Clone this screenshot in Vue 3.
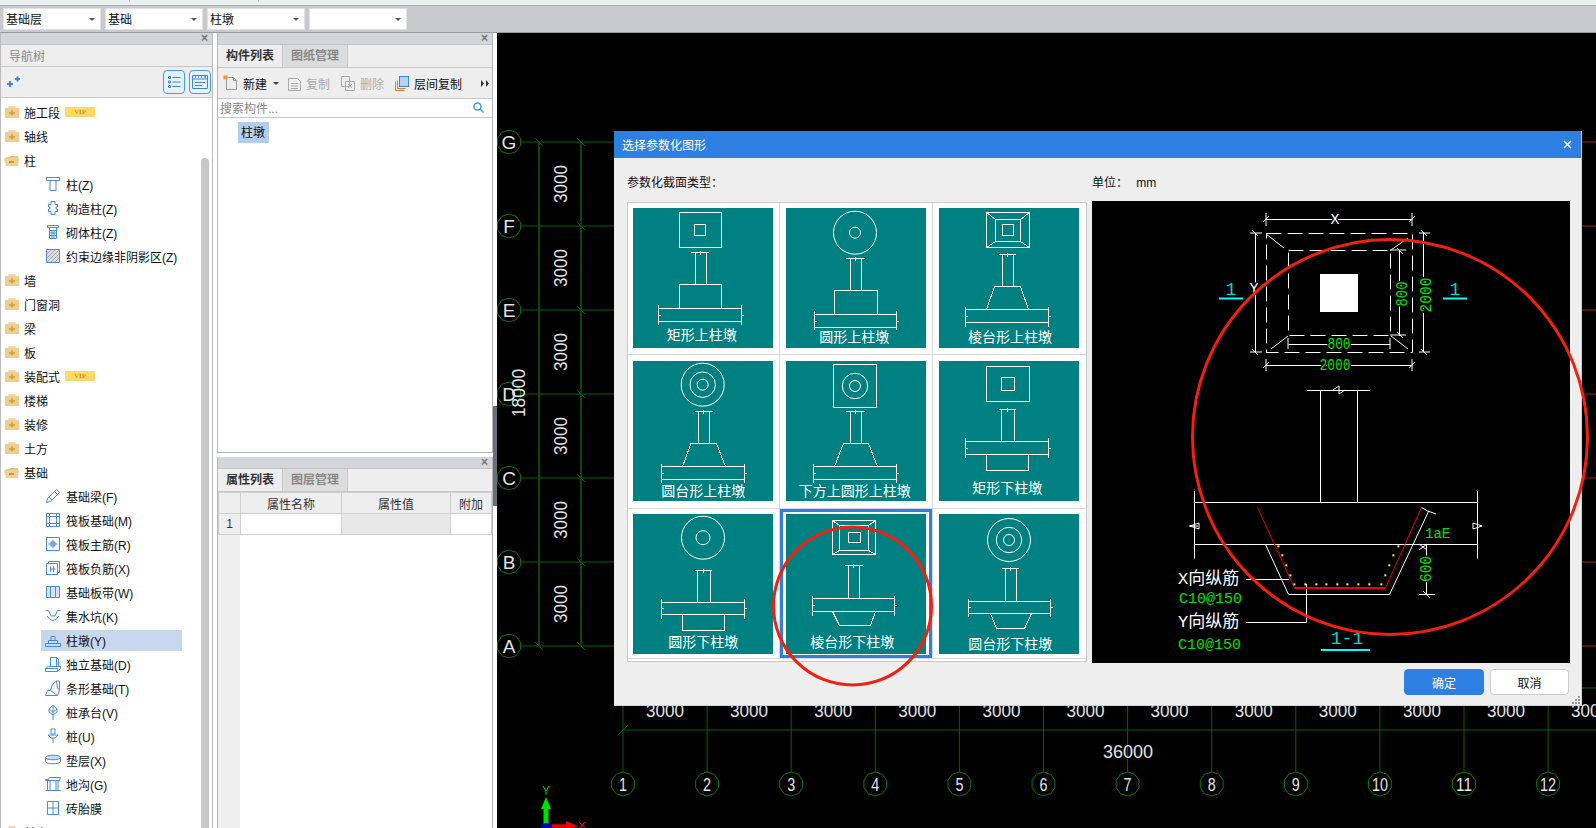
<script setup>
// helpers for the teal section thumbnails, coordinates are inside a 140x140 tile
const box = (x1, y1, x2, y2) => `M${x1} ${y1}H${x2}V${y2}H${x1}Z`;
const col = (capY, capL, capR, l, r, bottom) => {
  const mid = (capL + capR) / 2;
  return `M${capL} ${capY}H${capR}M${l} ${capY}V${bottom}M${r} ${capY}V${bottom}M${mid} ${capY - 2}v4`;
};
const base = (x1, x2, y1, y2, top, bot) => {
  const m = (y1 + y2) / 2;
  return box(x1, y1, x2, y2) + `M${x1} ${top}V${bot}M${x2} ${top}V${bot}M${x1 - 1} ${m}h3M${x2 - 1} ${m}h3`;
};
const trap = (t1, t2, y1, b1, b2, y2) => `M${b1} ${y2}L${t1} ${y1}H${t2}L${b2} ${y2}`;
const squares = (o, m, i) =>
  box(...o) + box(...m) + box(...i) +
  `M${o[0]} ${o[1]}L${m[0]} ${m[1]}M${o[2]} ${o[1]}L${m[2]} ${m[1]}M${o[0]} ${o[3]}L${m[0]} ${m[3]}M${o[2]} ${o[3]}L${m[2]} ${m[3]}`;

const tiles = [
  {
    label: "矩形上柱墩", lx: 68.7, ly: 132,
    d: box(46.5, 4.5, 88.5, 39.5) + box(61.5, 16.5, 72.5, 27.5) + col(44.5, 58, 76, 62.5, 73.5, 76.5) +
      box(46.5, 76.5, 88.5, 100.5) + base(25.5, 108.5, 100.5, 113.5, 97, 116.5),
    circles: [],
  },
  {
    label: "圆形上柱墩", lx: 68.3, ly: 134,
    d: col(50.5, 60, 79, 64.5, 75.5, 82.5) + box(48.5, 82.5, 91.5, 106.5) + base(28.5, 110.5, 106.5, 119.5, 103, 122),
    circles: [[69, 24.7, 21.5], [69, 24.7, 5.5]],
  },
  {
    label: "棱台形上柱墩", lx: 71, ly: 134,
    d: squares([47.5, 4.5, 90.5, 39.5], [56.5, 11.5, 81.5, 33.5], [63.5, 16.5, 74.5, 27.5]) +
      col(46.5, 59.5, 77, 63.5, 74.5, 78.5) + trap(55.5, 81.5, 78.5, 47.5, 89.5, 101.5) +
      base(26.5, 109.5, 101.5, 114.5, 99, 118.5),
    circles: [],
  },
  {
    label: "圆台形上柱墩", lx: 70.3, ly: 135,
    d: col(50.5, 61.5, 79.5, 65.5, 76.5, 82.5) + trap(58, 83.5, 82.5, 49.5, 92.5, 105.5) +
      base(28.5, 111.5, 105.5, 118.5, 103, 122),
    circles: [[69.7, 23.7, 21.5], [69.7, 23.7, 12.7], [69.7, 23.7, 5.5]],
  },
  {
    label: "下方上圆形上柱墩", lx: 68.7, ly: 135,
    d: box(47.5, 3.5, 90.5, 46.5) + col(50.5, 60, 78.5, 64.5, 75.5, 82.5) + trap(57.5, 82.5, 82.5, 48.5, 91.5, 105.5) +
      base(27.5, 110.5, 105.5, 118.5, 103, 122),
    circles: [[69, 25, 12.7], [69, 25, 5.5]],
  },
  {
    label: "矩形下柱墩", lx: 68.3, ly: 131.5,
    d: box(47.5, 5.5, 90.5, 40.5) + box(62.5, 16.5, 75.5, 29.5) + col(48.5, 59.5, 76.5, 62.5, 75.5, 80.5) +
      base(26.5, 109.5, 80.5, 93.5, 77, 97) + `M47.5 93.5V109.5H89.5V93.5`,
    circles: [],
  },
  {
    label: "圆形下柱墩", lx: 70.3, ly: 133,
    d: col(56.5, 61.5, 78.5, 64.5, 77.5, 88.5) + base(28.5, 111.5, 88.5, 100.5, 84.5, 104.5) + `M49.5 100.5V116.5H91.5V100.5`,
    circles: [[70, 23.7, 21.5], [70, 23.7, 7]],
  },
  {
    label: "棱台形下柱墩", lx: 66.3, ly: 133,
    d: squares([46.5, 6.5, 89.5, 40.5], [53.5, 11.5, 82.5, 36.5], [62.5, 18.5, 74.5, 28.5]) +
      col(51.5, 58.5, 76.5, 62.5, 73.5, 84.5) + base(26.5, 108.5, 84.5, 97.5, 81.5, 101.5) +
      `M46.5 97.5L53.5 111.5H84.5L89.5 97.5`,
    circles: [],
    selected: true,
  },
  {
    label: "圆台形下柱墩", lx: 71.3, ly: 134.5,
    d: col(54.5, 62.5, 79.5, 66.5, 77.5, 87.5) + base(29.5, 111.5, 87.5, 99.5, 84.5, 102.5) +
      `M51.5 99.5L57.5 114.5H85.5L92.5 99.5`,
    circles: [[70, 26, 21.5], [70, 26, 12.7], [70, 26, 5.5]],
  },
];

// 16x16 blue outline icons of the navigation tree
const icons = {
  zhu: "M1.5 1.5h13v3h-13zM4 4.5h8M5 4.5v10h6v-10",
  gouzao: "M6 1.5h4v3h2.5v2.5H11v2h1.5v2.5H10v3H6v-3H3.5V9H5V7H3.5V4.5H6z",
  qiti: "M2.5 1.5h11v2h-11zM4.5 3.5v11h7v-11M4.5 6.5h7M4.5 9h7M4.5 11.5h7M7 6.5v8M9 6.5v8",
  yueshu: "M1.5 1.5h13v13h-13z",
  liang: "M1.5 14.5l1-4L11.5 1.5l3 3-9 9zM9.5 3.5l3 3M4 9l3 3",
  fabanjc: "M1.5 1.5h13v13h-13zM1.5 4.5h13M1.5 11.5h13M4.5 1.5v13M11.5 1.5v13",
  fabanzj: "M1.5 1.5h13v13h-13zM8 3.5v9M3.5 8h9M6 6h4v4H6z",
  fabanfj: "M1.5 3.5h11v11h-11zM3.5 3.5v-2h11v11h-2M5.5 6.5v5M8.5 6v6M5.5 9h5",
  bandai: "M1.5 2.5h13v11h-13zM5.5 2.5v11M10.5 2.5v11",
  keng: "M.5 2.5h3l2.5 5.5h4l2.5-5.5h3M2 8q6 9 12 0",
  zhudun: "M.5 11.5h15v3H.5zM3.5 11.5v-3h9v3M6 8.5v-4h4v4",
  duli: "M5.5 1.5h6l2 2v7h-8zM11.5 1.5v9M.5 12.5l3-2h12v2l-3 3H.5z M.5 12.5h12v3",
  tiaoxing: "M.5 15.5l2-5h3l2-6 4-3.5h3v9l-2 5.5zM5.5 10.5l7 5M11.5 1l1 7 2 2",
  zct: "M8 1L12 5v3L8 11 4 8V5zM8 1v15M4 5l4 3 4-3",
  pile: "M6 1h4v5H6zM3 7h10l-3 3H6zM8 10v5",
  dian: "M.5 5.5c0-3 15-3 15 0v4c0 3-15 3-15 0zM.5 5.5c0 3 15 3 15 0",
  digou: "M.5 3.5h3l1-2h11l-1 3H.5zM2.5 4.5v10M13 4.5v10M.5 14.5h15M5 4.5v10M11 4.5v10",
  zhaitai: "M2.5 1.5h11v13h-11zM8 1.5v13M2.5 8h11",
};

const tree = [
  { label: "施工段", vip: true },
  { label: "轴线" },
  { label: "柱", open: true },
  { label: "柱(Z)", icon: "zhu" },
  { label: "构造柱(Z)", icon: "gouzao" },
  { label: "砌体柱(Z)", icon: "qiti" },
  { label: "约束边缘非阴影区(Z)", icon: "yueshu", hatch: true },
  { label: "墙" },
  { label: "门窗洞" },
  { label: "梁" },
  { label: "板" },
  { label: "装配式", vip: true },
  { label: "楼梯" },
  { label: "装修" },
  { label: "土方" },
  { label: "基础", open: true },
  { label: "基础梁(F)", icon: "liang" },
  { label: "筏板基础(M)", icon: "fabanjc" },
  { label: "筏板主筋(R)", icon: "fabanzj" },
  { label: "筏板负筋(X)", icon: "fabanfj" },
  { label: "基础板带(W)", icon: "bandai", tint: true },
  { label: "集水坑(K)", icon: "keng" },
  { label: "柱墩(Y)", icon: "zhudun", active: true },
  { label: "独立基础(D)", icon: "duli" },
  { label: "条形基础(T)", icon: "tiaoxing" },
  { label: "桩承台(V)", icon: "zct" },
  { label: "桩(U)", icon: "pile" },
  { label: "垫层(X)", icon: "dian", tint: true },
  { label: "地沟(G)", icon: "digou" },
  { label: "砖胎膜", icon: "zhaitai" },
  { label: "其它" },
];

// CAD grid, page coordinates
const rowAxes = ["G", "F", "E", "D", "C", "B", "A"].map((name, i) => ({ name, y: 142 + i * 84 }));
const colAxes = Array.from({ length: 12 }, (_, i) => ({ name: String(i + 1), x: 623 + i * 84.1 }));
const rowDims = [184, 268, 352, 436, 520, 604];
const colDims = colAxes.map((a) => a.x + 42);
const octagon = (cx, cy, r) => {
  let pts = [];
  for (let i = 0; i < 10; i++) {
    const a = (Math.PI * 2 * i) / 10 + Math.PI / 10;
    pts.push(`${(cx + r * Math.cos(a)).toFixed(1)},${(cy + r * Math.sin(a)).toFixed(1)}`);
  }
  return pts.join(" ");
};

const rebarDots = [
  [580, 319], [592, 346], [604, 376], [616, 406], [628, 433], [661, 433], [694, 433], [724, 433], [757, 433],
  [787, 433], [820, 433], [853, 433], [889, 433], [901, 406], [913, 376], [925, 346], [940, 319],
].map(([x, y]) => [1085 + x / 3, 440 + y / 3]);
</script>

<template>
  <div class="page">
    <div class="menu-strip">
      <span class="tick"></span>
      <span class="tick"></span>
    </div>
    <div class="combos">
      <div class="combo" v-for="c in ['基础层', '基础', '柱墩', '']" :key="c">
        <span>{{ c }}</span><i class="caret"></i>
      </div>
    </div>

    <div class="main">
      <!-- 导航树 -->
      <aside class="nav">
        <div class="dock-head"><span class="x">×</span></div>
        <div class="nav-title">导航树</div>
        <div class="nav-tools">
          <svg class="spark" width="14" height="12" viewBox="0 0 14 12">
            <path d="M0 8h6M3 5v6" stroke="#3f86d8" stroke-width="2" fill="none" />
            <path d="M8 3h5M10.5 .5v5" stroke="#3f86d8" stroke-width="2" fill="none" />
          </svg>
          <div class="toggle">
            <svg width="14" height="14" viewBox="0 0 14 14" fill="none" stroke="#3f86d8">
              <path d="M1.5 1.5h2v2h-2zM1.5 6h2v2h-2zM1.5 10.500h2v2h-2zM5.500 2.500h8M5.500 7h8M5.500 11.500h8" />
            </svg>
          </div>
          <div class="toggle">
            <svg width="16" height="14" viewBox="0 0 16 14" fill="none" stroke="#3f86d8">
              <path d="M.5 .5h15v13H.5zM.5 4h15M3 7.500h10M3 10.500h7" />
              <path d="M3 2h1M6 2h1M9 2h1M12 2h2" stroke-width="1.500" />
            </svg>
          </div>
        </div>
        <div class="tree">
          <ul class="tree-list">
            <li v-for="row in tree" :key="row.label" :class="['row', { child: row.icon, active: row.active }]">
              <svg v-if="row.icon" class="ico" width="16" height="16" viewBox="0 0 16 16">
                <template v-if="row.hatch">
                  <rect x="2" y="2" width="12" height="12" fill="#dcdcdc" />
                  <path d="M2 6l4-4M2 10l8-8M2 14L14 2M6 14l8-8M10 14l4-4" stroke="#a8a8a8" fill="none" />
                </template>
                <rect v-if="row.icon === 'bandai'" x="2" y="3" width="12" height="10" fill="#d5e5f7" />
                <ellipse v-if="row.icon === 'dian'" cx="8" cy="5.500" rx="7.500" ry="2.500" fill="#c9ddf4" />
                <path :d="icons[row.icon]" fill="none" stroke="#4a8ad8" />
              </svg>
              <svg v-else class="folder" width="16" height="12" viewBox="0 0 16 12">
                <template v-if="row.open">
                  <path d="M0 3h5l1-1h8v2H4z" fill="#e3c486" />
                  <path d="M0 4h15l-1 8H2z" fill="#f2cf8c" />
                  <path d="M5 8h5" stroke="#b58a3e" stroke-width="1.500" />
                </template>
                <template v-else>
                  <path d="M5 0h6l1 2H4z" fill="#efd9ab" />
                  <rect x="1" y="2" width="14" height="10" fill="#f0cd8d" />
                  <path d="M5 7h6M8 4.500v5" stroke="#c69a4c" stroke-width="1.500" />
                </template>
              </svg>
              <span>{{ row.label }}</span>
              <em v-if="row.vip" class="vip">VIP</em>
            </li>
          </ul>
          <div class="scroll"><div class="thumb"></div></div>
        </div>
      </aside>

      <!-- 构件列表 / 属性列表 -->
      <section class="mid">
        <div class="upper">
          <div class="dock-head"><span class="x">×</span></div>
          <div class="tabs">
            <span class="tab on">构件列表</span>
            <span class="tab">图纸管理</span>
          </div>
          <div class="tools">
            <span class="tool new">
              <svg width="15" height="16" viewBox="0 0 15 16" fill="none" stroke="#9a9a9a">
                <path d="M3.500 2.500h7l3 3v9h-10zM10.500 2.500v3h3" />
                <path d="M.5 .5h4v4h-4z" fill="#f39a2d" stroke="#f7c27f" stroke-dasharray="1 1" />
              </svg>
              新建<i class="caret dark"></i>
            </span>
            <span class="tool off">
              <svg width="13" height="15" viewBox="0 0 13 15" fill="none" stroke="#aaa">
                <path d="M.5 2.500h9l3 3v9H.5zM3 7.500h7M3 10h7M3 12.500h7" />
              </svg>
              复制
            </span>
            <span class="tool off">
              <svg width="14" height="15" viewBox="0 0 14 15" fill="none" stroke="#aaa">
                <path d="M.5 .5h8v10h-8zM4.500 5.500h9v9h-9zM7 8l4 4M11 8l-4 4" />
              </svg>
              删除
            </span>
            <span class="tool">
              <svg width="14" height="15" viewBox="0 0 14 15" fill="none">
                <path d="M.5 5.500v9h9" stroke="#e07b39" />
                <path d="M2.500 4.500v8h8" stroke="#e07b39" />
                <rect x="4.500" y=".5" width="9" height="10" fill="#b3d3f5" stroke="#3f86d8" />
              </svg>
              层间复制
            </span>
            <span class="more">
              <svg width="8" height="7" viewBox="0 0 8 7"><path d="M0 0l3 3.500L0 7zM5 0l3 3.500L5 7z" fill="#333" /></svg>
            </span>
          </div>
          <div class="search">
            <span>搜索构件...</span>
            <svg width="11" height="11" viewBox="0 0 11 11" fill="none" stroke="#3f9fe0" stroke-width="1.500">
              <circle cx="4.500" cy="4.500" r="3.500" /><path d="M7 7l3.500 3.500" />
            </svg>
          </div>
          <div class="list"><span class="item">柱墩</span></div>
        </div>

        <div class="lower">
          <div class="dock-head"><span class="x">×</span></div>
          <div class="tabs">
            <span class="tab on">属性列表</span>
            <span class="tab">图层管理</span>
          </div>
          <table class="props">
            <colgroup>
              <col style="width: 22px" /><col style="width: 101px" /><col style="width: 109px" /><col style="width: 41px" />
            </colgroup>
            <thead>
              <tr><th></th><th>属性名称</th><th>属性值</th><th>附加</th></tr>
            </thead>
            <tbody>
              <tr><th>1</th><td></td><td class="ro"></td><td></td></tr>
            </tbody>
          </table>
          <div class="rail"></div>
        </div>
      </section>

      <div class="split"><div class="grip"></div></div>

      <!-- 绘图区 -->
      <div class="canvas">
        <svg class="cad" width="1099" height="795" viewBox="497 33 1099 795">
          <g stroke="#0d5f0d" fill="none">
            <path v-for="a in rowAxes" :key="a.name" :d="`M521 ${a.y}H1596`" />
            <path d="M539 142V646M581 142V646" stroke-width="1.500" />
            <path v-for="a in colAxes" :key="a.name" :d="`M${a.x} 700V772`" />
            <path d="M623 730H1596" />
            <path d="M618 735l10-10" />
            <path v-for="a in rowAxes" :key="a.name + 't'" :d="`M577 ${a.y - 4}l8 8`" />
            <path d="M535 138l8 8M535 642l8 8" />
            <polygon v-for="a in rowAxes" :key="a.name + 'b'" :points="octagon(509, a.y, 12)" stroke="#0a7a0a" />
            <polygon v-for="a in colAxes" :key="a.name + 'c'" :points="octagon(a.x, 784, 12)" stroke="#0a7a0a" />
          </g>
          <path d="M1582 142H1596M1582 226H1596M1582 310H1596M1582 394H1596M1582 478H1596M1582 562H1596M1582 646H1596" stroke="#8a0000" />
          <path d="M1582 688H1596" stroke="#0d5f0d" />
          <g class="cad-text">
            <text v-for="a in rowAxes" :key="a.name" x="509" :y="a.y + 7" text-anchor="middle" font-size="19">{{ a.name }}</text>
            <text
              v-for="a in colAxes"
              :key="a.name"
              :x="a.x"
              y="791"
              text-anchor="middle"
              font-size="19"
              :textLength="a.name.length * 8"
              lengthAdjust="spacingAndGlyphs"
            >{{ a.name }}</text>
            <text
              v-for="y in rowDims"
              :key="y"
              x="567"
              :y="y"
              :transform="`rotate(-90 567 ${y})`"
              text-anchor="middle"
              font-size="19"
              textLength="38"
              lengthAdjust="spacingAndGlyphs"
            >3000</text>
            <text
              x="525"
              y="393"
              transform="rotate(-90 525 393)"
              text-anchor="middle"
              font-size="19"
              textLength="48"
              lengthAdjust="spacingAndGlyphs"
            >18000</text>
            <text
              v-for="x in colDims"
              :key="x"
              :x="x"
              y="717"
              text-anchor="middle"
              font-size="19"
              textLength="38"
              lengthAdjust="spacingAndGlyphs"
            >3000</text>
            <text x="1128" y="758" text-anchor="middle" font-size="19" textLength="50" lengthAdjust="spacingAndGlyphs">36000</text>
          </g>
          <!-- 坐标轴 -->
          <path d="M546 828V806" stroke="#00e000" stroke-width="5" />
          <path d="M546 797l5 12h-10z" fill="#00e000" />
          <path d="M552 826H567" stroke="#f00000" stroke-width="3.500" />
          <path d="M566 821l12 5-12 4z" fill="#f00000" />
          <circle cx="546" cy="829" r="6" fill="#0000c0" />
          <path d="M543 786l3 5 3-5M546 791v4" stroke="#00e000" fill="none" />
          <path d="M579 822l6 6M585 822l-6 6" stroke="#f00000" fill="none" />
        </svg>

        <div class="dialog">
          <header class="dlg-title">
            <span>选择参数化图形</span>
            <svg width="9" height="9" viewBox="0 0 9 9"><path d="M1 1l7 7M8 1l-7 7" stroke="#fff" stroke-width="1.600" /></svg>
          </header>
          <div class="dlg-body">
            <div class="dlg-left">
              <div class="dlg-label">参数化截面类型：</div>
              <div class="shapes">
                <div v-for="t in tiles" :key="t.label" :class="['cell', { sel: t.selected }]">
                  <svg class="tile" width="140" height="140" viewBox="0 0 140 140">
                    <path :d="t.d" fill="none" stroke="#fff" shape-rendering="crispEdges" />
                    <circle v-for="(c, i) in t.circles" :key="i" :cx="c[0]" :cy="c[1]" :r="c[2]" fill="none" stroke="#fff" />
                    <text :x="t.lx" :y="t.ly" text-anchor="middle" font-size="14" fill="#fff" class="tile-label">{{ t.label }}</text>
                  </svg>
                </div>
              </div>
            </div>
            <div class="dlg-right">
              <div class="dlg-label unit">单位： <span>mm</span></div>
              <svg class="preview" width="478" height="462" viewBox="1092 201 478 462">
                <g fill="none" stroke="#fff">
                  <rect x="1266.500" y="233.500" width="146" height="119" stroke-dasharray="15 6" />
                  <rect x="1288.500" y="250.500" width="102" height="85" stroke-dasharray="15 6" />
                  <path d="M1266.500 219.500H1412.500M1266 213V226M1412 213V226M1263 222l6-6M1409 222l6-6" />
                  <path d="M1255.500 233V352M1250 233H1262M1250 352H1262M1252 230l6 6M1252 349l6 6" />
                  <path d="M1423.500 233V352M1419 233H1430M1419 352H1430M1421 230l6 6M1421 349l6 6" />
                  <path d="M1399.500 250V336M1390 250H1406M1390 335H1406M1397 248l6 6M1397 332l6 6" />
                  <path d="M1288.500 344.500H1390.500M1288 338V349M1390 338V349" />
                  <path d="M1266.500 365.500H1412.500M1266 359V371M1412 359V371M1263 368l6-6M1409 368l6-6" />
                  <path d="M1266 234l18 14M1408 238l-17 12M1288 336l-17 13M1391 336l17 13" />
                  <path d="M1307 390.500H1370M1320.500 390.500V502M1357.500 390.500V502M1333 390l6-4v8l6-4" />
                  <path d="M1194.500 491V558.500M1477.500 491V558.500M1194.500 502.500H1477.500M1194.500 544.500H1477.500" />
                  <path d="M1190 526l9-3v6zM1198 526h-9M1482 526l-9-3v6z" />
                  <path d="M1265.500 544.500L1288.500 594.500H1389.500L1428.500 511.500L1421.500 507.500M1428 511l8 3" />
                  <path d="M1419 544l8 6M1427 544l-8 6" />
                  <path d="M1426.500 544V594.500M1419 594.500H1435M1423 591l7 7" />
                  <path d="M1246 579.500H1289M1246 622.500H1306.500V584" />
                </g>
                <path d="M1257.500 507.500L1294.500 588" stroke="#f00000" fill="none" />
                <path d="M1294.500 588H1385.500" stroke="#f00000" fill="none" stroke-width="2" />
                <path d="M1385.500 588L1421.500 507.500" stroke="#f00000" fill="none" />
                <rect v-for="(p, i) in rebarDots" :key="i" :x="p[0] - 1" :y="p[1] - 1" width="2" height="2" fill="#ffff00" />
                <rect x="1320" y="274" width="38" height="38" fill="#fff" />
                <path d="M1219 298.500H1243M1443 298.500H1467" stroke="#00ffff" stroke-width="2" />
                <path d="M1321 650H1370" stroke="#00ffff" stroke-width="2" />
                <g class="mono">
                  <text x="1335" y="224" text-anchor="middle" fill="#fff" font-size="15" stroke="#000" paint-order="stroke" stroke-width="3">X</text>
                  <text x="1254" y="293" text-anchor="middle" fill="#fff" font-size="15" stroke="#000" paint-order="stroke" stroke-width="3">Y</text>
                  <text x="1231" y="295" text-anchor="middle" fill="#00d8d8" font-size="18">1</text>
                  <text x="1455" y="295" text-anchor="middle" fill="#00d8d8" font-size="18">1</text>
                  <text x="1339" y="349" text-anchor="middle" fill="#00e000" font-size="16" stroke="#000" paint-order="stroke" stroke-width="3" textLength="23" lengthAdjust="spacingAndGlyphs">800</text>
                  <text x="1335" y="370" text-anchor="middle" fill="#00e000" font-size="16" stroke="#000" paint-order="stroke" stroke-width="3" textLength="31" lengthAdjust="spacingAndGlyphs">2000</text>
                  <text x="1407" y="294" transform="rotate(-90 1407 294)" text-anchor="middle" fill="#00e000" font-size="16" stroke="#000" paint-order="stroke" stroke-width="3" textLength="25" lengthAdjust="spacingAndGlyphs">800</text>
                  <text x="1431" y="295" transform="rotate(-90 1431 295)" text-anchor="middle" fill="#00e000" font-size="16" stroke="#000" paint-order="stroke" stroke-width="3" textLength="35" lengthAdjust="spacingAndGlyphs">2000</text>
                  <text x="1431" y="569" transform="rotate(-90 1431 569)" text-anchor="middle" fill="#00e000" font-size="16" stroke="#000" paint-order="stroke" stroke-width="3" textLength="26" lengthAdjust="spacingAndGlyphs">600</text>
                  <text x="1425" y="538" fill="#00e000" font-size="14">1aE</text>
                  <text x="1178" y="584" fill="#fff" font-size="17">X向纵筋</text>
                  <text x="1179" y="603" fill="#00e000" font-size="15">C10@150</text>
                  <text x="1178" y="627" fill="#fff" font-size="17">Y向纵筋</text>
                  <text x="1178" y="649" fill="#00e000" font-size="15">C10@150</text>
                  <text x="1347" y="644" text-anchor="middle" fill="#00d8d8" font-size="18">1-1</text>
                </g>
              </svg>
            </div>
          </div>
          <footer class="dlg-foot">
            <button class="btn primary">确定</button>
            <button class="btn">取消</button>
            <svg class="grip-corner" width="8" height="8" viewBox="0 0 8 8">
              <path d="M6 0h2v2H6zM3 3h2v2H3zM6 3h2v2H6zM0 6h2v2H0zM3 6h2v2H3zM6 6h2v2H6z" fill="#999" />
            </svg>
          </footer>
        </div>

        <!-- 红色标注圈 -->
        <svg class="marks" width="1099" height="795" viewBox="497 33 1099 795">
          <circle cx="852.500" cy="606" r="79" fill="none" stroke="#f2200f" stroke-width="3" />
          <circle cx="1390" cy="437" r="197.500" fill="none" stroke="#f2200f" stroke-width="3" />
        </svg>
      </div>
    </div>
  </div>
</template>

<style scoped>
* {
  box-sizing: border-box;
}
.page {
  width: 1596px;
  height: 828px;
  overflow: hidden;
  display: flex;
  flex-direction: column;
  background: #fff;
  color: #111;
  font: 12px "Liberation Sans", "Noto Sans CJK SC", sans-serif;
}
.menu-strip {
  height: 6px;
  background: #eaeeee;
  border-bottom: 1px solid #a9abae;
  display: flex;
  gap: 128px;
  padding-left: 129px;
}
.tick {
  width: 1px;
  height: 2px;
  background: #bbb;
}
.combos {
  height: 27px;
  background: #c9cacd;
  border-bottom: 1px solid #9a9b9e;
  display: flex;
  gap: 4px;
  padding: 2px 0 0 3px;
}
.combo {
  width: 98px;
  height: 22px;
  background: #fff;
  border: 1px solid #e2e2e2;
  padding-left: 2px;
  padding-top: 1px;
  line-height: 20px;
  position: relative;
  display: flex;
  justify-content: space-between;
  align-items: center;
  padding-right: 5px;
}
.caret {
  width: 0;
  height: 0;
  border: 3px solid transparent;
  border-top: 3px solid #555;
  border-bottom: 0;
  border-left-width: 3px;
  border-right-width: 3px;
}
.main {
  flex: 1;
  display: flex;
  min-height: 0;
}
.nav {
  width: 213px;
  border-left: 1px solid #bbb;
  border-right: 1px solid #bbb;
  display: flex;
  flex-direction: column;
  margin-right: 4px;
  background: #fff;
}
.dock-head {
  height: 12px;
  flex: none;
  background: #d3d5d9;
  border-bottom: 1px solid #c2c4c8;
  display: flex;
  justify-content: flex-end;
  padding-right: 4px;
}
.x {
  color: #777;
  font-size: 12px;
  line-height: 11px;
  font-weight: bold;
}
.nav-title {
  height: 22px;
  background: #eee;
  border-bottom: 1px solid #c8c8c8;
  color: #888;
  padding: 2px 0 0 8px;
  line-height: 21px;
  flex: none;
}
.nav-tools {
  height: 31px;
  background: #eee;
  border-bottom: 1px solid #c8c8c8;
  display: flex;
  align-items: center;
  gap: 4px;
  padding: 0 1px 0 6px;
  flex: none;
}
.spark {
  margin-right: auto;
}
.toggle {
  width: 22px;
  height: 24px;
  border: 1px solid #4a9ae8;
  border-radius: 4px;
  background: #e5f1fb;
  display: flex;
  align-items: center;
  justify-content: center;
}
.tree {
  flex: 1;
  display: flex;
  min-height: 0;
  overflow: hidden;
}
.tree-list {
  list-style: none;
  margin: 0;
  padding: 2px 0 0 3px;
  flex: 1;
}
.row {
  height: 24px;
  display: flex;
  align-items: center;
  white-space: nowrap;
}
.folder {
  margin-right: 4px;
  flex: none;
}
.row.child {
  margin-left: 37px;
  width: 141px;
  padding-left: 4px;
  height: 24px;
}
.row.active {
  background: linear-gradient(#fff 0 2px, #c7d7ee 2px 23px, #fff 23px);
}
.ico {
  margin-right: 5px;
  flex: none;
}
.vip {
  margin-left: 5px;
  width: 30px;
  height: 10px;
  background: #ffd966;
  color: #c79c1e;
  font: bold 7px/10px "Liberation Serif", serif;
  text-align: center;
}
.scroll {
  width: 8px;
  margin-right: 3px;
  padding-top: 60px;
  flex: none;
}
.thumb {
  height: 100%;
  background: #c8c8c8;
  border-radius: 4px 4px 0 0;
}
.mid {
  width: 276px;
  display: flex;
  flex-direction: column;
  gap: 4px;
}
.upper,
.lower {
  border-left: 1px solid #b5b5b5;
  border-right: 1px solid #b5b5b5;
  display: flex;
  flex-direction: column;
}
.upper {
  height: 420px;
  border-bottom: 1px solid #b5b5b5;
}
.lower {
  flex: 1;
  min-height: 0;
}
.tabs {
  height: 23px;
  background: #eee;
  border-bottom: 1px solid #c8c8c8;
  display: flex;
  flex: none;
}
.tab {
  width: 65px;
  background: #dcdcdc;
  border-right: 1px solid #c8c8c8;
  color: #888;
  text-align: center;
  line-height: 22px;
  font-weight: bold;
}
.tab.on {
  background: #eee;
  color: #333;
}
.tools {
  height: 31px;
  background: #eee;
  display: flex;
  align-items: center;
  padding-left: 5px;
  flex: none;
  border-bottom: 1px solid #c8c8c8;
}
.tool {
  display: flex;
  align-items: center;
  gap: 5px;
  margin-right: 11px;
}
.tool.new {
  margin-right: 9px;
}
.tool.off {
  color: #aaa;
}
.caret.dark {
  margin-left: 1px;
  border-top-color: #444;
}
.more {
  margin-left: auto;
  margin-right: 3px;
  display: flex;
}
.search {
  height: 19px;
  background: #fff;
  border-bottom: 1px solid #c8c8c8;
  color: #888;
  display: flex;
  align-items: center;
  justify-content: space-between;
  padding: 0 8px 2px 2px;
  flex: none;
}
.list {
  flex: 1;
  padding: 4px 0 0 20px;
  background: #fff;
}
.item {
  display: block;
  width: 31px;
  height: 21px;
  line-height: 22px;
  padding-left: 3px;
  background: #b3cdee;
}
.props {
  table-layout: fixed;
  width: 273px;
  border-collapse: collapse;
  flex: none;
}
.props th,
.props td {
  height: 21px;
  padding: 0;
  border: 1px solid #cfcfcf;
  font-weight: normal;
  font-size: 12px;
  color: #333;
  text-align: center;
}
.props thead th {
  background: #eee;
}
.props tbody th {
  background: #eee;
}
.props td.ro {
  background: #e8e8e8;
}
.rail {
  width: 22px;
  flex: 1;
  background: #efefef;
}
.split {
  width: 4px;
  padding-top: 373px;
  background: #fff;
}
.grip {
  height: 100px;
  background: #666f7a;
}
.canvas {
  flex: 1;
  background: #000;
  position: relative;
  overflow: hidden;
}
.cad,
.marks {
  position: absolute;
  left: 0;
  top: 0;
}
.marks {
  pointer-events: none;
}
.cad-text text {
  fill: #e4e4e4;
  font-family: "Liberation Sans", sans-serif;
}
.dialog {
  position: absolute;
  left: 117px;
  top: 98px;
  width: 968px;
  height: 575px;
  background: #eee;
  display: flex;
  flex-direction: column;
  border-right: 1px solid #c9d3de;
  border-bottom: 1px solid #c9d3de;
}
.dlg-title {
  height: 27px;
  flex: none;
  background: #2e7fe2;
  color: #fff;
  display: flex;
  align-items: center;
  justify-content: space-between;
  padding: 0 9px 0 8px;
}
.dlg-body {
  display: flex;
  gap: 5px;
  padding-left: 13px;
  flex: none;
}
.dlg-label {
  height: 43px;
  padding-top: 17px;
  line-height: 16px;
  color: #111;
}
.dlg-left .dlg-label {
  height: 44px;
}
.unit span {
  margin-left: 5px;
}
.shapes {
  width: 460px;
  height: 460px;
  border: 1px solid #c8c8c8;
  background: #fff;
  display: grid;
  grid-template-columns: 152px 153px 153px;
  grid-template-rows: 152px 154px 150px;
}
.cell {
  padding: 5px 0 0 6px;
  border-right: 1px solid #d8d8d8;
  border-bottom: 1px solid #d8d8d8;
}
.cell:nth-child(3n + 1) {
  padding-left: 5px;
}
.cell:nth-child(3n) {
  border-right: 0;
}
.cell:nth-child(n + 4):nth-child(-n + 6) {
  padding-top: 6px;
}
.cell.sel {
  box-shadow: inset 0 0 0 3px #2e7fe2;
}
.tile {
  display: block;
  background: #008080;
}
.tile-label {
  font-family: "Noto Sans CJK SC", sans-serif;
}
.preview {
  display: block;
  background: #000;
}
.mono text {
  font-family: "Liberation Mono", "Noto Sans CJK SC", monospace;
}
.dlg-foot {
  flex: 1;
  display: flex;
  justify-content: flex-end;
  gap: 6px;
  padding: 6px 12px 0 0;
  position: relative;
}
.btn {
  width: 79px;
  height: 26px;
  border: 1px solid #ccc;
  border-radius: 4px;
  background: #fff;
  color: #111;
  font: 12px "Liberation Sans", "Noto Sans CJK SC", sans-serif;
  padding: 0;
}
.btn.primary {
  width: 80px;
  background: #2e7fe2;
  border-color: #2e7fe2;
  color: #fff;
}
.grip-corner {
  position: absolute;
  right: 1px;
  bottom: 1px;
}
</style>

<style>
html,
body {
  margin: 0;
  background: #fff;
}
</style>
